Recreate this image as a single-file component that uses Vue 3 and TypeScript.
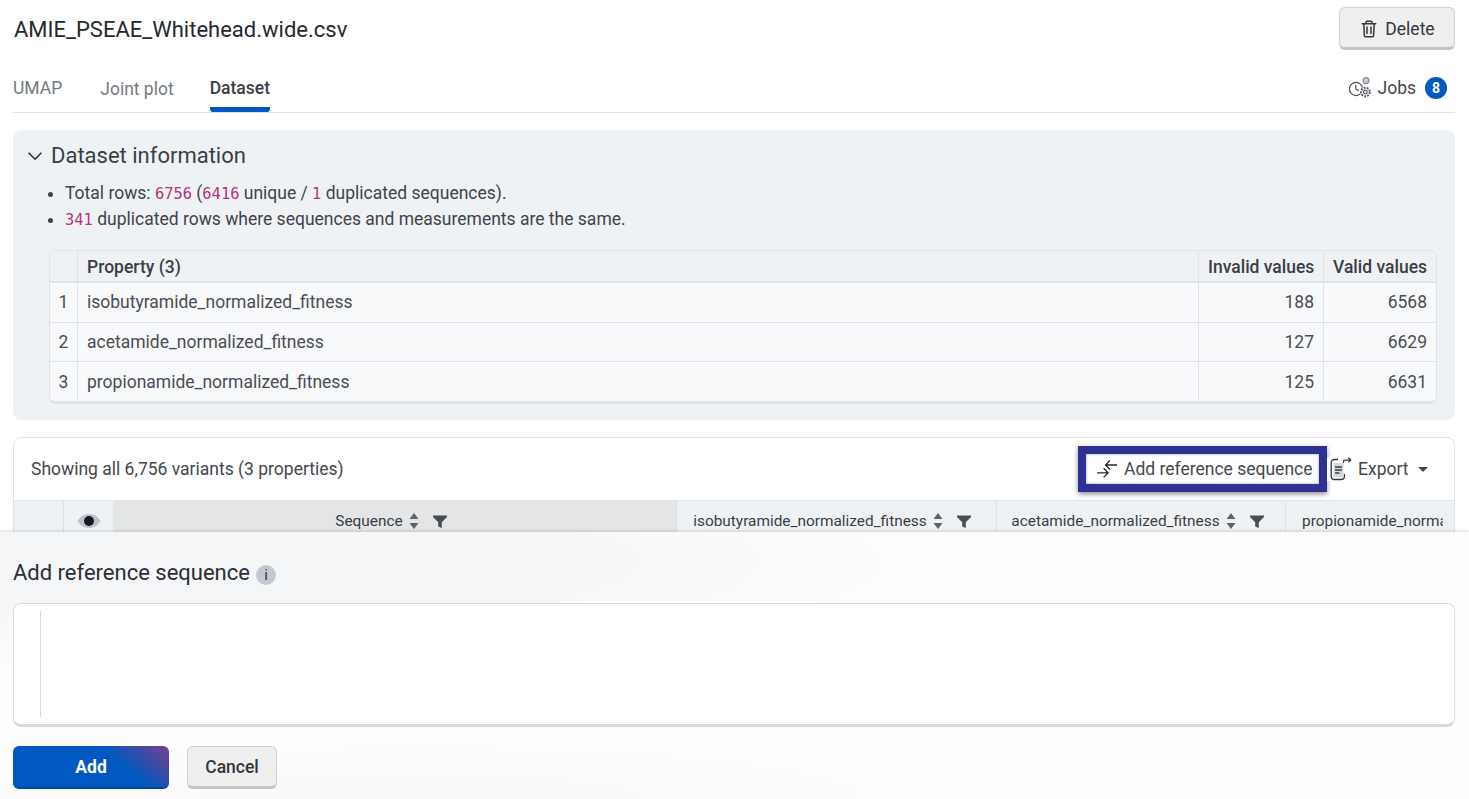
<template>
  <div class="page">
    <header class="top">
      <h1 class="file-name">AMIE_PSEAE_Whitehead.wide.csv</h1>
      <button class="btn btn-delete">
        <svg width="20" height="20" viewBox="0 0 20 20" fill="none" stroke="#33373b" stroke-width="1.5" stroke-linejoin="round" stroke-linecap="round">
          <path d="M3.2 4.8h13.6" />
          <path d="M7 4.6V3.2c0-.5.4-.9.9-.9h4.2c.5 0 .9.4.9.9v1.4" />
          <path d="M4.8 4.8l.6 11.6c0 .8.6 1.3 1.3 1.3h6.6c.7 0 1.3-.5 1.3-1.3l.6-11.6" />
          <path d="M8 8v6.4M12 8v6.4" />
        </svg>
        Delete
      </button>
    </header>

    <nav class="tabs">
      <a v-for="tab in tabs" :key="tab" class="tab" :class="{ active: tab === 'Dataset', first: tab === 'UMAP' }">{{ tab }}</a>
      <div class="jobs">
        <svg width="23" height="22" viewBox="0 0 23 22" fill="none" stroke="#4a4f55" stroke-width="1.2">
          <circle cx="7" cy="12" r="6.6" />
          <path d="M6.8 7.800v4.400l3 1.400" />
          <circle cx="17" cy="3.600" r="3" fill="#c9ced4" stroke="#8a9097" />
          <circle cx="16.400" cy="15" r="5.200" fill="#fff" stroke="none" />
          <circle cx="16.400" cy="15" r="1.800" />
          <circle cx="16.400" cy="15" r="4.300" stroke-width="2" stroke-dasharray="1.800 1.200" />
        </svg>
        <span>Jobs</span>
        <span class="badge">8</span>
      </div>
    </nav>

    <section class="info">
      <h2 class="info-title">
        <svg width="16" height="16" viewBox="0 0 16 16" fill="none" stroke="#2b3036" stroke-width="1.600">
          <path d="M1.600 4.800 8 11.200l6.400-6.400" />
        </svg>
        Dataset information
      </h2>
      <ul class="info-list">
        <li>Total rows: <code>6756</code> (<code>6416</code> unique / <code>1</code> duplicated sequences).</li>
        <li><code>341</code> duplicated rows where sequences and measurements are the same.</li>
      </ul>
      <div class="prop-wrap">
        <table class="prop-table">
          <thead>
            <tr>
              <th class="col-idx"></th>
              <th class="left">Property (3)</th>
              <th class="col-invalid">Invalid values</th>
              <th class="col-valid">Valid values</th>
            </tr>
          </thead>
          <tbody>
            <tr v-for="(row, i) in properties" :key="row.name">
              <td class="idx">{{ i + 1 }}</td>
              <td class="left">{{ row.name }}</td>
              <td>{{ row.invalid }}</td>
              <td>{{ row.valid }}</td>
            </tr>
          </tbody>
        </table>
      </div>
    </section>

    <section class="variants">
      <div class="toolbar">
        <span class="showing">Showing all 6,756 variants (3 properties)</span>
        <button class="tool highlighted">
          <svg width="20" height="18" viewBox="0 0 20 18" fill="none" stroke="#24282c" stroke-width="1.300">
            <path d="M0 12.800h11M6.600 8.200l4.500 4.600-4.500 4.600" />
            <path d="M20 5H8.600M13 .5 8.500 5l4.500 4.500" />
          </svg>
          Add reference sequence
        </button>
        <button class="tool export">
          <svg width="22" height="24" viewBox="0 0 22 24" fill="none" stroke="#33373b" stroke-width="1.300">
            <path d="M8 2.500H4.500C2.500 2.500 1.200 3.800 1.200 5.800v13.400c0 2 1.300 3.300 3.300 3.300h6.500c2 0 3.400-1.300 3.400-3.300V17" />
            <rect x="3.500" y="6" width="10" height="14" rx="1" fill="#d5d9dd" stroke="none" />
            <path d="M5 10h7M5 13h7M5 16h4.500" stroke="#3a3f45" stroke-width="1.500" />
            <path d="M13.500 6V4.800c0-1 .7-1.700 1.700-1.700h5.300M18.300 .8l2.400 2.300-2.400 2.300" />
          </svg>
          Export
          <span class="caret"></span>
        </button>
      </div>
      <div class="grid-head">
        <div class="gh gh-blank"></div>
        <div class="gh gh-eye">
          <svg width="24" height="16" viewBox="0 0 24 16">
            <path d="M.5 8C3.500 3.400 7 1 12 1s8.500 2.400 11.500 7c-3 4.600-6.500 7-11.500 7S3.500 12.600.5 8z" fill="#bcc2c9" />
            <circle cx="12" cy="8" r="5" fill="#17191c" />
          </svg>
        </div>
        <div v-for="col in columns" :key="col.label" class="gh" :class="col.cls">
          <span class="gh-label">{{ col.label }}</span>
          <template v-if="col.tools">
            <svg class="sort" width="10" height="16" viewBox="0 0 10 16" fill="#5f6368">
              <path d="M5 0 9.500 6H.5zM5 16 .5 10h9z" />
            </svg>
            <svg class="filter" width="14" height="13" viewBox="0 0 14 13" fill="#4a4e53">
              <path d="M0 .5h14v1.500L8.800 7.200V13l-3.600-1.500V7.200L0 2z" />
            </svg>
          </template>
        </div>
      </div>
    </section>

    <section class="drawer">
      <h2 class="drawer-title">
        Add reference sequence
        <span class="info-dot">i</span>
      </h2>
      <div class="editor">
        <div class="gutter"></div>
      </div>
      <div class="actions">
        <button class="btn btn-add">Add</button>
        <button class="btn btn-cancel">Cancel</button>
      </div>
    </section>
  </div>
</template>

<script setup lang="ts">
const tabs = ['UMAP', 'Joint plot', 'Dataset'];

const properties = [
  { name: 'isobutyramide_normalized_fitness', invalid: 188, valid: 6568 },
  { name: 'acetamide_normalized_fitness', invalid: 127, valid: 6629 },
  { name: 'propionamide_normalized_fitness', invalid: 125, valid: 6631 },
];

const columns = [
  { label: 'Sequence', cls: 'gh-seq', tools: true },
  { label: 'isobutyramide_normalized_fitness', cls: 'gh-iso', tools: true },
  { label: 'acetamide_normalized_fitness', cls: 'gh-ace', tools: true },
  { label: 'propionamide_normalized_fitness', cls: 'gh-pro', tools: false },
];
</script>

<style>
html,
body {
  margin: 0;
  background: #fff;
}
</style>

<style scoped>
.page {
  position: relative;
  height: 799px;
  overflow: hidden;
  padding: 0 14px 0 13px;
  box-sizing: border-box;
  font-family: Roboto, "Liberation Sans", sans-serif;
  color: #33373c;
}

.top {
  display: flex;
  align-items: flex-start;
  justify-content: space-between;
  height: 65px;
  padding-top: 7px;
  box-sizing: border-box;
}

.file-name {
  margin: 10px 0 0 1px;
  font-size: 22px;
  line-height: 25px;
  font-weight: 400;
  color: #25292d;
}

.btn {
  font-family: inherit;
  cursor: pointer;
  border-radius: 6px;
  box-sizing: border-box;
}

.btn-delete {
  display: flex;
  align-items: center;
  justify-content: center;
  gap: 6px;
  width: 116px;
  height: 43px;
  padding: 2px 0 0;
  font-size: 17.500px;
  color: #33373c;
  background: #efefef;
  border: 1px solid #d0d0d0;
  border-bottom: 3px solid #c4c4c4;
}

.tabs {
  display: flex;
  align-items: flex-start;
  height: 48px;
  border-bottom: 1px solid #dfe2e8;
  box-sizing: border-box;
}

.tab {
  height: 47px;
  line-height: 48px;
  margin-right: 35px;
  padding: 0 1px;
  font-size: 17.500px;
  color: #75797e;
  box-sizing: border-box;
}

.tab.first {
  padding: 0;
  margin-right: 37px;
  margin-top: -1px;
}

.tab.active {
  color: #3a3e43;
  font-weight: 500;
  padding: 0;
  line-height: 48px;
  border-bottom: 5px solid #0058c0;
  border-radius: 3px;
  margin-top: -1px;
  height: 48px;
}

.jobs {
  margin-left: auto;
  display: flex;
  align-items: center;
  height: 46px;
  margin-right: 8px;
  font-size: 17.500px;
  color: #44484d;
}

.jobs svg {
  margin-right: 6px;
}

.badge {
  width: 22px;
  height: 22px;
  margin-left: 9px;
  border-radius: 50%;
  background: #0058c0;
  color: #fff;
  font-size: 14px;
  font-weight: 700;
  line-height: 22px;
  text-align: center;
}

.info {
  margin-top: 17px;
  height: 290px;
  padding: 0 18px 0 14px;
  box-sizing: border-box;
  background: #eff2f5;
  border-radius: 8px;
}

.info-title {
  display: flex;
  align-items: center;
  gap: 8px;
  margin: 0;
  padding-top: 13px;
  height: 38px;
  font-size: 22px;
  line-height: 25px;
  font-weight: 400;
  color: #3a3f45;
  box-sizing: border-box;
}

.info-list {
  margin: 12px 0 0;
  padding: 0 0 0 38px;
  font-size: 17.500px;
  line-height: 26px;
  color: #3f4348;
}

code {
  font-family: "DejaVu Sans Mono", monospace;
  font-size: 15.400px;
  line-height: 1;
  color: #b8327a;
}

.prop-wrap {
  margin: 18px 0 0 22px;
  background: #f8f9fb;
  border: 1px solid #dfe2e8;
  border-bottom-width: 3px;
  border-radius: 7px;
  overflow: hidden;
}

.prop-table {
  width: 100%;
  border-collapse: collapse;
  table-layout: fixed;
  font-size: 17.500px;
}

.prop-table th {
  height: 29px;
  padding: 1px 9px 0;
  background: #eff2f5;
  border-bottom: 2px solid #dfe2e8;
  border-left: 1px solid #dfe2e8;
  font-weight: 500;
  text-align: right;
  white-space: nowrap;
  color: #3a3e43;
}

.prop-table th:first-child,
.prop-table td:first-child {
  border-left: 0;
}

.prop-table td {
  height: 38.700px;
  padding: 0 9px;
  border-top: 1px solid #dfe2e8;
  border-left: 1px solid #dfe2e8;
  text-align: right;
  color: #4a4e53;
}

.prop-table tbody tr:first-child td {
  border-top: 0;
}

.prop-table .left {
  text-align: left;
}

.prop-table .idx {
  padding: 0;
  text-align: center;
}

.col-idx {
  width: 27px;
  padding: 0 !important;
}

.col-invalid {
  width: 106px;
}

.col-valid {
  width: 94px;
}

.variants {
  margin-top: 17px;
  border: 1px solid #e1e3e7;
  border-radius: 8px 8px 0 0;
  overflow: hidden;
}

.toolbar {
  display: flex;
  align-items: center;
  height: 62px;
  padding-left: 17px;
  box-sizing: border-box;
}

.showing {
  font-size: 17.500px;
  color: #44484d;
  margin-right: auto;
}

.tool {
  display: flex;
  align-items: center;
  font-family: inherit;
  font-size: 17.500px;
  color: #44484d;
  background: #fff;
  border: 0;
  padding: 0;
}

.highlighted {
  width: 249px;
  height: 46px;
  gap: 7px;
  padding-left: 11px;
  box-sizing: border-box;
  border: 8px solid #2e3192;
  box-shadow: 0 2px 5px rgba(0, 0, 0, 0.45), inset 0 0 3px rgba(0, 0, 0, 0.4);
}

.export {
  gap: 6px;
  width: 127px;
  padding-left: 3px;
  box-sizing: border-box;
}

.caret {
  width: 0;
  height: 0;
  margin-left: 3px;
  border: 5px solid transparent;
  border-top: 5px solid #44484d;
  border-bottom: 0;
}

.grid-head {
  display: flex;
  height: 32px;
  background: #eff2f5;
  border-top: 1px solid #dfe2e8;
  font-size: 15.400px;
}

.gh {
  display: flex;
  align-items: center;
  justify-content: center;
  box-sizing: border-box;
  height: 40px;
  padding-right: 7px;
  border-right: 1px solid #dfe2e8;
  color: #3a3e43;
  flex: none;
}

.gh-blank {
  width: 50px;
  padding: 0;
}

.gh-eye {
  width: 49px;
  padding: 0;
  border-right: 0;
}

.gh-seq {
  width: 564px;
  background: #e3e5e6;
}

.gh-iso {
  padding-right: 9px;
  flex-basis: 320px;
}

.gh-ace {
  width: 289px;
  padding-right: 7px;
}

.gh-pro {
  flex: 1;
  min-width: 0;
  justify-content: flex-start;
  padding: 0 11px 0 16px;
  border-right: 0;
}

.gh-label {
  overflow: hidden;
  white-space: nowrap;
}

.sort {
  margin-left: 6px;
  flex: none;
}

.filter {
  margin-left: 14px;
  flex: none;
}

.drawer {
  position: absolute;
  left: 0;
  right: 0;
  top: 532px;
  bottom: 0;
  padding: 0 14px 0 13px;
  background:
    radial-gradient(ellipse 720px 110px at 200px 30px, #f5f6f8 0%, #f5f6f8 45%, rgba(245, 246, 248, 0) 100%),
    radial-gradient(ellipse 520px 60px at 420px 267px, #f8f8f9 0%, rgba(248, 248, 249, 0) 100%),
    #fdfdfd;
  box-shadow: 0 -1px 3px rgba(0, 0, 0, 0.15);
}

.drawer-title {
  display: flex;
  align-items: center;
  gap: 6px;
  margin: 0;
  padding-top: 10px;
  height: 71px;
  box-sizing: border-box;
  font-size: 22px;
  line-height: 25px;
  font-weight: 400;
  color: #2b2f34;
}

.info-dot {
  display: block;
  width: 20px;
  height: 20px;
  margin-top: 5px;
  border-radius: 50%;
  background: #c3c9d0;
  color: #33373c;
  font-size: 15px;
  line-height: 21px;
  text-align: center;
}

.editor {
  height: 124px;
  padding: 7px 0 0 26px;
  box-sizing: border-box;
  background: #fff;
  border: 1px solid #dcdcdc;
  border-bottom: 3px solid #d8d8d8;
  border-radius: 8px;
}

.gutter {
  height: 106px;
  border-left: 1px solid #dcdcdc;
}

.actions {
  display: flex;
  gap: 18px;
  margin-top: 19px;
}

.btn-add {
  width: 156px;
  height: 43px;
  font-size: 17.500px;
  font-weight: 700;
  color: #fff;
  border: 0;
  border-bottom: 2px solid #00479e;
  background: linear-gradient(40deg, #0058c0 0%, #0058c0 66%, #7a3f8a 100%);
}

.btn-cancel {
  width: 90px;
  height: 43px;
  font-size: 17.500px;
  font-weight: 500;
  color: #33373c;
  background: #efefef;
  border: 1px solid #d0d0d0;
  border-bottom: 3px solid #c4c4c4;
}
</style>
